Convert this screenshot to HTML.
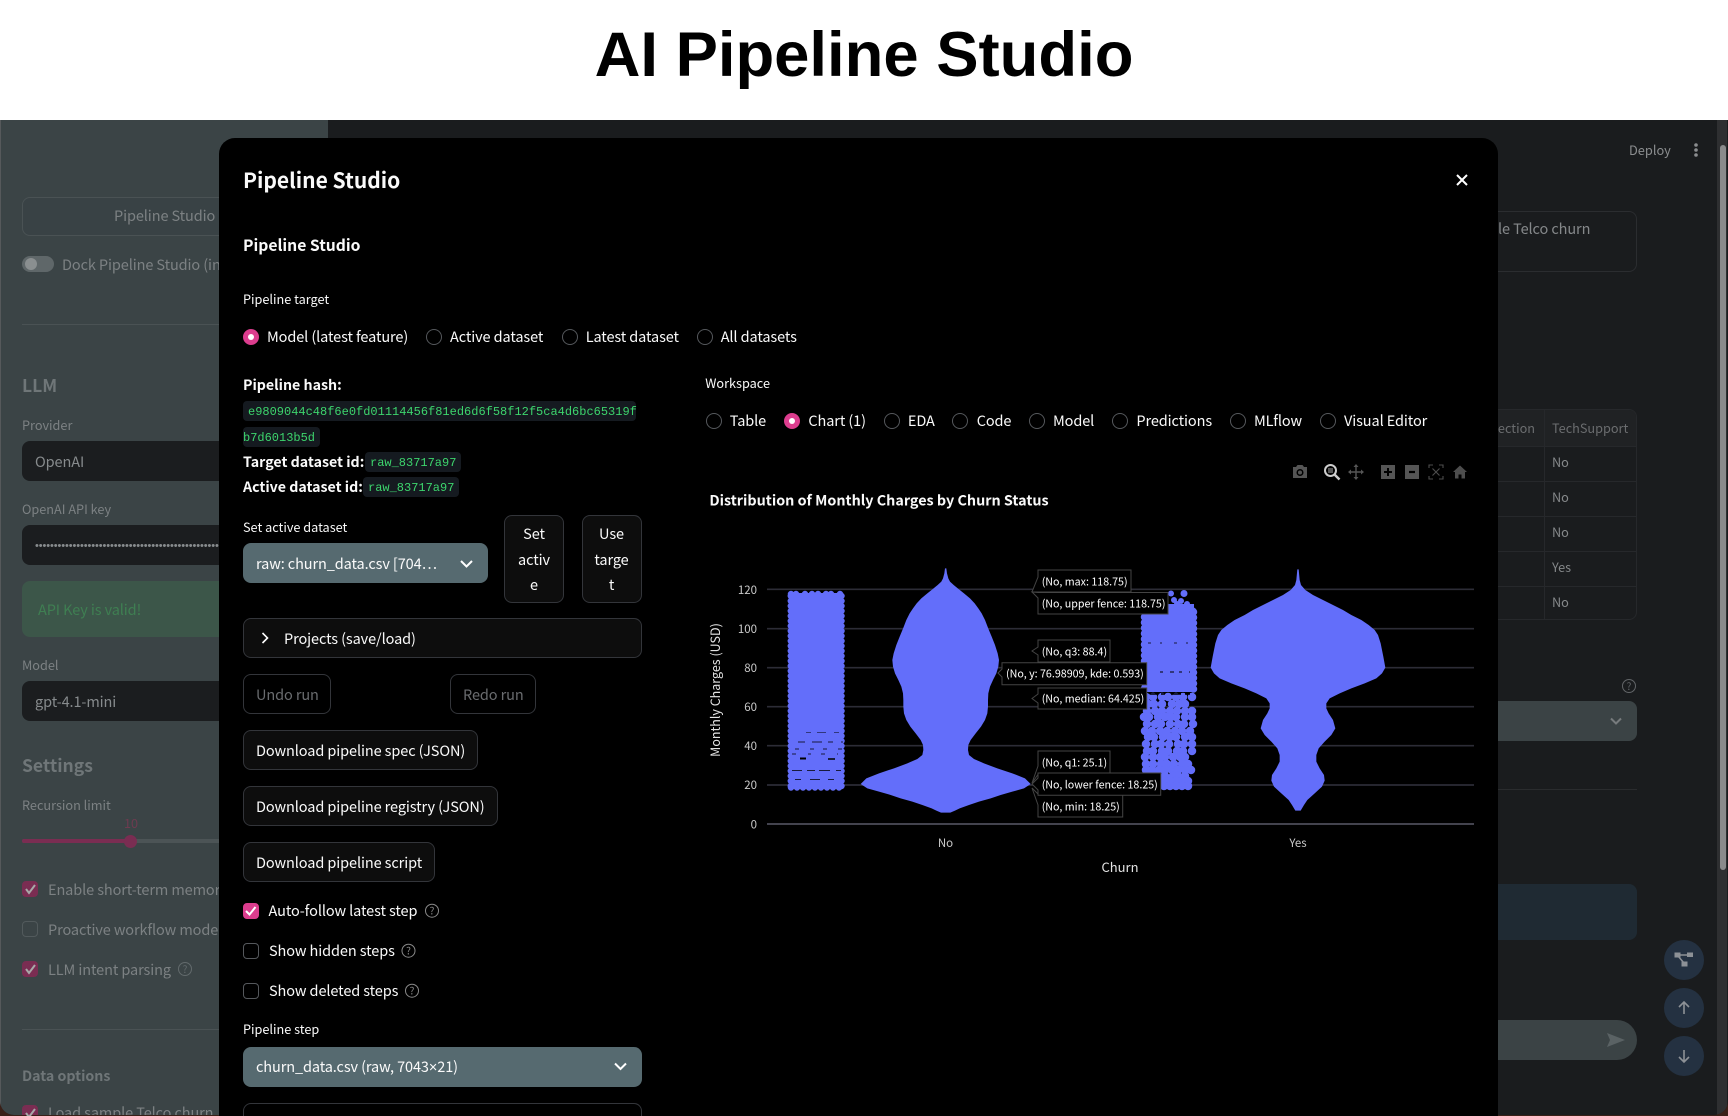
<!DOCTYPE html>
<html><head><meta charset="utf-8"><title>AI Pipeline Studio</title>
<style>
html,body{margin:0;padding:0;width:1728px;height:1116px;overflow:hidden;background:#fff}
*{box-sizing:border-box}
body{font-family:"Noto Sans CJK JP","Liberation Sans",sans-serif;font-size:14.5px;letter-spacing:-.1px;position:relative}
h1{position:absolute;left:0;top:15px;width:1728px;margin:0;text-align:center;font:bold 63.4px/80px "Liberation Sans",sans-serif;color:#000;letter-spacing:0}
#under{position:absolute;left:0;top:1090px;width:1728px;height:26px;background:#3a2018}
#frame{position:absolute;left:0;top:120px;width:1728px;height:995px;background:#1a1c1e;border-radius:0 0 14px 14px;overflow:hidden}
#side{position:absolute;left:0;top:0;width:328px;height:995px;background:#3b4446;border-left:1px solid #56595b}
.t{position:absolute;white-space:nowrap;line-height:20px;margin-top:.5px}
.s{font-size:12.7px;letter-spacing:0}
.b{font-weight:700;font-size:14.2px;letter-spacing:0}
.d{color:#7c8183}
.w{color:#fafafa}
.abs{position:absolute}
.sel{position:absolute;height:40px;background:#1b1d1f;border-radius:8px}
#modal{position:absolute;left:219px;top:138px;width:1279px;height:978px;background:#000;border-radius:16px 16px 0 0;overflow:hidden;color:#fafafa}
.r{position:absolute;width:16px;height:16px;border-radius:50%;border:1px solid #55585c}
.r.on{background:#dc3d8e;border-color:#dc3d8e}
.r.on:after{content:"";position:absolute;left:4px;top:4px;width:6px;height:6px;border-radius:50%;background:#fff}
.c{position:absolute;width:16px;height:16px;border-radius:4px;border:1px solid #55585c}
.c.on{background:#dc3d8e;border-color:#dc3d8e}
.btn{position:absolute;height:40px;border:1px solid #33353a;border-radius:8px;background:#0d0d0d;line-height:39.500px;padding-left:12px;white-space:nowrap;color:#fafafa}
.code{position:absolute;height:20px;background:#151a20;border-radius:4px;font:12px/22px "Liberation Mono",monospace;letter-spacing:0;color:#3dd56d;white-space:nowrap}
.stk{position:absolute;top:377px;width:60px;height:88px;border:1px solid #33353a;border-radius:8px;background:#0d0d0d;text-align:center;line-height:25.6px;padding-top:5px}
#over{position:absolute;left:0;top:0;width:1728px;height:1116px;pointer-events:none}
svg text{font-family:"Noto Sans CJK JP","Liberation Sans",sans-serif;letter-spacing:0}
.x{font-family:"Liberation Sans",sans-serif}
</style></head><body>
<h1>AI Pipeline Studio</h1>
<div id="under"></div>
<div id="frame">
 <div id="side">
  <div class="abs" style="left:21px;top:77px;width:260px;height:39px;border:1px solid #4a5254;border-radius:8px;background:#394245"></div>
  <div class="t d" style="left:113px;top:85.500px">Pipeline Studio</div>
  <div class="abs" style="left:21px;top:136px;width:32px;height:16px;border-radius:8px;background:#5f6769"></div>
  <div class="abs" style="left:24px;top:138px;width:12px;height:12px;border-radius:50%;background:#8a8f90"></div>
  <div class="t d" style="left:61px;top:134px">Dock Pipeline Studio (in sidebar)</div>
  <div class="abs" style="left:21px;top:204px;width:280px;height:1px;background:#4a5254"></div>
  <div class="t b" style="left:21px;top:254px;font-size:17.500px;color:#6f7678;line-height:22px">LLM</div>
  <div class="t s d" style="left:21px;top:294px">Provider</div>
  <div class="sel" style="left:21px;top:321px;width:280px"></div>
  <div class="t" style="left:34px;top:331px;color:#878b8d">OpenAI</div>
  <div class="t s d" style="left:21px;top:378px">OpenAI API key</div>
  <div class="sel" style="left:21px;top:405px;width:280px"></div>
  <div class="t" style="left:34px;top:415px;color:#878b8d;font:11px/20px 'Liberation Sans',sans-serif">••••••••••••••••••••••••••••••••••••••••••••••••••••••</div>
  <div class="abs" style="left:21px;top:461px;width:280px;height:56px;background:#3c5649;border-radius:8px"></div>
  <div class="t" style="left:37px;top:479px;color:#3f7f52">API Key is valid!</div>
  <div class="t s d" style="left:21px;top:534px">Model</div>
  <div class="sel" style="left:21px;top:561px;width:280px"></div>
  <div class="t" style="left:34px;top:571px;color:#878b8d">gpt-4.1-mini</div>
  <div class="t b" style="left:21px;top:634px;font-size:17.500px;color:#6f7678;line-height:22px">Settings</div>
  <div class="t s d" style="left:21px;top:674px">Recursion limit</div>
  <div class="t s" style="left:123px;top:692px;color:#6e3b50">10</div>
  <div class="abs" style="left:21px;top:719px;width:280px;height:4px;background:#4c5456;border-radius:2px"></div>
  <div class="abs" style="left:21px;top:719px;width:108px;height:4px;background:#7a2d52;border-radius:2px"></div>
  <div class="abs" style="left:123px;top:714.5px;width:13px;height:13px;background:#7a2d52;border-radius:50%"></div>
  <div class="c" style="left:21px;top:761px;background:#7a2d52;border-color:#7a2d52"></div>
  <div class="t d" style="left:47px;top:759px">Enable short-term memory</div>
  <div class="c" style="left:21px;top:801px;border-color:#525a5c"></div>
  <div class="t d" style="left:47px;top:799px">Proactive workflow mode</div>
  <div class="c" style="left:21px;top:841px;background:#7a2d52;border-color:#7a2d52"></div>
  <div class="t d" style="left:47px;top:839px">LLM intent parsing</div>
  <div class="abs" style="left:21px;top:909px;width:280px;height:1px;background:#4a5254"></div>
  <div class="t b" style="left:21px;top:945px;color:#6f7678">Data options</div>
  <div class="c" style="left:21px;top:985px;background:#7a2d52;border-color:#7a2d52"></div>
  <div class="t d" style="left:47px;top:982px">Load sample Telco churn</div>
 </div>
 <div class="t" style="left:1629px;top:19.500px;font-size:12.800px;letter-spacing:0;color:#8b8d8f">Deploy</div>
 <div class="abs" style="left:1299px;top:91px;width:338px;height:61px;border:1px solid #2b2d30;border-radius:8px"></div>
 <div class="t" style="left:1498px;top:98px;color:#85888a">le Telco churn</div>
 <div class="abs" style="left:1299px;top:289px;width:338px;height:211px;border:1px solid #26282b;border-radius:8px;overflow:hidden">
   <div class="abs" style="left:0;top:0;width:338px;height:36px;background:#202224"></div>
   <div class="abs" style="left:244px;top:0;width:1px;height:211px;background:#26282b"></div>
   <div class="abs" style="left:0;top:36px;width:338px;height:1px;background:#26282b"></div>
   <div class="abs" style="left:0;top:71px;width:338px;height:1px;background:#26282b"></div>
   <div class="abs" style="left:0;top:106px;width:338px;height:1px;background:#26282b"></div>
   <div class="abs" style="left:0;top:141px;width:338px;height:1px;background:#26282b"></div>
   <div class="abs" style="left:0;top:176px;width:338px;height:1px;background:#26282b"></div>
 </div>
 <div class="t s" style="right:193px;top:297px;color:#6b6d6f">rotection</div>
 <div class="t s" style="left:1552px;top:297px;color:#6b6d6f">TechSupport</div>
 <div class="t s" style="left:1552px;top:331.500px;color:#85888a">No</div>
 <div class="t s" style="left:1552px;top:366.500px;color:#85888a">No</div>
 <div class="t s" style="left:1552px;top:401.500px;color:#85888a">No</div>
 <div class="t s" style="left:1552px;top:436.500px;color:#85888a">Yes</div>
 <div class="t s" style="left:1552px;top:471.500px;color:#85888a">No</div>
 <div class="abs" style="left:1400px;top:581px;width:237px;height:40px;background:#3b4345;border-radius:8px"></div>
 <div class="abs" style="left:1299px;top:669px;width:338px;height:1px;background:#2a2c2e"></div>
 <div class="abs" style="left:1400px;top:764px;width:237px;height:56px;background:#1f2a33;border-radius:8px"></div>
 <div class="abs" style="left:1400px;top:900px;width:237px;height:40px;background:#3b4345;border-radius:0 20px 20px 0"></div>
 <div class="abs" style="left:1664px;top:820px;width:40px;height:40px;border-radius:50%;background:#243141"></div>
 <div class="abs" style="left:1664px;top:868px;width:40px;height:40px;border-radius:50%;background:#243141"></div>
 <div class="abs" style="left:1664px;top:916px;width:40px;height:40px;border-radius:50%;background:#243141"></div>
 <div class="abs" style="left:1717px;top:0;width:10px;height:995px;background:#2e2f31"></div>
 <div class="abs" style="left:1720px;top:25px;width:6px;height:725px;background:#8a8b8c;border-radius:3px"></div>
</div>

<svg id="over" style="z-index:1" viewBox="0 0 1728 1116" width="1728" height="1116">
 <g fill="#8b8d8f"><circle cx="1696" cy="145" r="1.8"/><circle cx="1696" cy="150" r="1.8"/><circle cx="1696" cy="155" r="1.8"/></g>
 <path d="M1611 718.500L1616 723.500L1621 718.500" fill="none" stroke="#777b7d" stroke-width="2"/>
 <circle cx="1629" cy="686" r="6.500" fill="none" stroke="#626568" stroke-width="1"/>
 <text x="1629" y="690" text-anchor="middle" font-size="10" fill="#626568">?</text>
 <path d="M1607 1033L1625 1040L1607 1047L1610 1040Z" fill="#5a6264"/>
 <g fill="#8d9196" stroke="#8d9196"><rect x="1675" y="953" width="5" height="4"/><rect x="1687.500" y="953" width="5" height="3.500"/><rect x="1682" y="962" width="5" height="4"/><path d="M1680 955H1688M1678 956L1684 963" stroke-width="1.500" fill="none"/></g>
 <path d="M1684 1014V1002M1679 1007L1684 1002L1689 1007" fill="none" stroke="#8d9196" stroke-width="1.600"/>
 <path d="M1684 1050V1062M1679 1057L1684 1062L1689 1057" fill="none" stroke="#8d9196" stroke-width="1.600"/>
 <path d="M26 889L29 893L35 885M26 969L29 973L35 965M26 1113L29 1117L35 1109" fill="none" stroke="#a8a8a8" stroke-width="2"/>
 <circle cx="185" cy="969" r="6.500" fill="none" stroke="#626a6c" stroke-width="1"/>
 <text x="185" y="973" text-anchor="middle" font-size="10" fill="#626a6c">?</text>
</svg>

<div id="modal" style="z-index:2">
 <div class="t b" style="left:24px;top:29.500px;font-size:21px;line-height:24px">Pipeline Studio</div>
 <div class="t b" style="left:24px;top:95px;font-size:15.700px;line-height:22px">Pipeline Studio</div>
 <div class="t s" style="left:24px;top:150.500px">Pipeline target</div>
 <div class="r on" style="left:23.500px;top:190.700px"></div><div class="t" style="left:48px;top:188px">Model (latest feature)</div>
 <div class="r" style="left:207px;top:190.700px"></div><div class="t" style="left:231px;top:188px">Active dataset</div>
 <div class="r" style="left:342.500px;top:190.700px"></div><div class="t" style="left:366.700px;top:188px">Latest dataset</div>
 <div class="r" style="left:478px;top:190.700px"></div><div class="t" style="left:501.700px;top:188px">All datasets</div>
 <div class="t b" style="left:24px;top:236px">Pipeline hash:</div>
 <div class="code" style="left:24px;top:263px;width:393px;padding-left:5px">e9809044c48f6e0fd01114456f81ed6d6f58f12f5ca4d6bc65319f</div>
 <div class="code" style="left:24px;top:288.700px;width:77px">b7d6013b5d</div>
 <div class="t b" style="left:24px;top:313px">Target dataset id:</div>
 <div class="code" style="left:146px;top:314px;width:96px;padding-left:5px">raw_83717a97</div>
 <div class="t b" style="left:24px;top:338.500px">Active dataset id:</div>
 <div class="code" style="left:144px;top:339px;width:96px;padding-left:5px">raw_83717a97</div>
 <div class="t s" style="left:24px;top:378.500px">Set active dataset</div>
 <div class="abs" style="left:24px;top:405px;width:244.500px;height:40px;background:#566a70;border-radius:8px"></div>
 <div class="t" style="left:37px;top:415px">raw: churn_data.csv [704…</div>
 <div class="stk" style="left:285px">Set<br>activ<br>e</div>
 <div class="stk" style="left:362.500px">Use<br>targe<br>t</div>
 <div class="btn" style="left:24px;top:480.300px;width:398.500px;padding-left:40px">Projects (save/load)</div>
 <div class="btn" style="left:24px;top:536px;width:88px;color:#6a6c6f;background:#000">Undo run</div>
 <div class="btn" style="left:231px;top:536px;width:86px;color:#6a6c6f;background:#000">Redo run</div>
 <div class="btn" style="left:24px;top:592px;width:235px">Download pipeline spec (JSON)</div>
 <div class="btn" style="left:24px;top:648px;width:254.500px">Download pipeline registry (JSON)</div>
 <div class="btn" style="left:24px;top:704px;width:191.500px">Download pipeline script</div>
 <div class="c on" style="left:24px;top:764.700px"></div>
 <div class="t" style="left:49.500px;top:762px">Auto-follow latest step</div>
 <div class="c" style="left:24px;top:804.700px"></div>
 <div class="t" style="left:50px;top:802px">Show hidden steps</div>
 <div class="c" style="left:24px;top:844.700px"></div>
 <div class="t" style="left:50px;top:842px">Show deleted steps</div>
 <div class="t s" style="left:24px;top:880.500px">Pipeline step</div>
 <div class="abs" style="left:24px;top:908.700px;width:398.500px;height:40px;background:#566a70;border-radius:8px"></div>
 <div class="t" style="left:37px;top:918px">churn_data.csv (raw, 7043<span class="x">×</span>21)</div>
 <div class="abs" style="left:24px;top:964.700px;width:398.500px;height:40px;border:1px solid #33353a;border-radius:8px"></div>
 <div class="t s" style="left:486.300px;top:234.500px">Workspace</div>
 <div class="r" style="left:486.500px;top:274.700px"></div><div class="t" style="left:510.800px;top:272px">Table</div>
 <div class="r on" style="left:565px;top:274.700px"></div><div class="t" style="left:589.400px;top:272px">Chart (1)</div>
 <div class="r" style="left:665px;top:274.700px"></div><div class="t" style="left:688.900px;top:272px">EDA</div>
 <div class="r" style="left:733.400px;top:274.700px"></div><div class="t" style="left:757.700px;top:272px">Code</div>
 <div class="r" style="left:810px;top:274.700px"></div><div class="t" style="left:834px;top:272px">Model</div>
 <div class="r" style="left:893px;top:274.700px"></div><div class="t" style="left:917.400px;top:272px">Predictions</div>
 <div class="r" style="left:1010.500px;top:274.700px"></div><div class="t" style="left:1035px;top:272px">MLflow</div>
 <div class="r" style="left:1101px;top:274.700px"></div><div class="t" style="left:1125px;top:272px">Visual Editor</div>
</div>

<svg id="chart" style="position:absolute;left:0;top:0;z-index:3" viewBox="0 0 1728 1116" width="1728" height="1116">
 <path d="M1457 175L1467 185M1467 175L1457 185" stroke="#fff" stroke-width="2"/>
 <path d="M461 561L466.500 566.500L472 561" fill="none" stroke="#fff" stroke-width="2"/>
 <path d="M615 1063.500L620.500 1069L626 1063.500" fill="none" stroke="#fff" stroke-width="2"/>
 <path d="M262.500 633L267.500 638L262.500 643" fill="none" stroke="#fff" stroke-width="1.600"/>
 <path d="M246 911L249.500 914.500L255.500 907" fill="none" stroke="#fff" stroke-width="2"/>
 <g fill="none" stroke="#8a8a8a" stroke-width="1"><circle cx="432" cy="910.700" r="6.500"/><circle cx="408.500" cy="950.700" r="6.500"/><circle cx="412" cy="990.700" r="6.500"/></g>
 <g font-size="10" fill="#8a8a8a" text-anchor="middle"><text x="432" y="914.500">?</text><text x="408.500" y="954.500">?</text><text x="412" y="994.500">?</text></g>

 <!-- modebar -->
 <g fill="#555">
  <path d="M1293 467H1296L1297.500 465H1302.500L1304 467H1307V478H1293Z"/>
  <circle cx="1300" cy="472.500" r="3.500" fill="#000"/><circle cx="1300" cy="472.500" r="2"/>
  <circle cx="1330.500" cy="470.500" r="5.500" fill="none" stroke="#ccc" stroke-width="2"/>
  <rect x="1328" y="468" width="5" height="5" fill="#555"/>
  <path d="M1334.500 474.500L1339.500 479.500" stroke="#ccc" stroke-width="2.500"/>
  <path d="M1356 465V479M1349 472H1363" stroke="#555" stroke-width="1.400"/>
  <path d="M1356 464L1353.500 467H1358.500ZM1356 480L1353.500 477H1358.500ZM1348 472L1351 469.500V474.500ZM1364 472L1361 469.500V474.500Z"/>
  <rect x="1381" y="465" width="14" height="14"/><path d="M1388 468V476M1384 472H1392" stroke="#000" stroke-width="2"/>
  <rect x="1405" y="465" width="14" height="14"/><path d="M1409 472H1415" stroke="#000" stroke-width="2.200"/>
  <path d="M1429 468V465H1433M1439 465H1443V468M1443 476V479H1439M1433 479H1429V476M1432.500 468.500L1439.500 475.500M1439.500 468.500L1432.500 475.500" fill="none" stroke="#4d4d4d" stroke-width="1.100"/>
  <path d="M1460 465.500L1467 472H1465V478.500H1461.500V474.500H1458.500V478.500H1455V472H1453Z" fill="#4d4d4d"/>
 </g>

 <text x="709.400" y="505.500" font-size="14.350" font-weight="700" fill="#fafafa">Distribution of Monthly Charges by Churn Status</text>

 <!-- grid -->
 <g stroke="#2c2c36" stroke-width="1.700">
  <path d="M767 589.300H1474M767 628.700H1474M767 667.700H1474M767 706.700H1474M767 745.700H1474M767 785H1474"/>
 </g>
 <path d="M767 824H1474" stroke="#43434e" stroke-width="2"/>

 <g font-size="11.500" fill="#c9c9c9" text-anchor="end">
  <text x="757" y="594">120</text><text x="757" y="633">100</text><text x="757" y="672">80</text><text x="757" y="711">60</text><text x="757" y="750">40</text><text x="757" y="789">20</text><text x="757" y="828.500">0</text>
 </g>
 <g font-size="11.500" fill="#c9c9c9" text-anchor="middle"><text x="945.500" y="847">No</text><text x="1298" y="847">Yes</text></g>
 <text x="1120" y="872" font-size="13" text-anchor="middle" fill="#e4e4e4">Churn</text>
 <text transform="translate(720 690) rotate(-90)" font-size="12.500" text-anchor="middle" fill="#e4e4e4">Monthly Charges (USD)</text>

 <!-- violin No -->
 <polygon transform="translate(780 560) scale(.33333)" fill="#636efa" points="499,25 501,40 505,55 510,65 521,75 537,88 552,100 570,115 584,130 595,145 605,160 615,180 625,206 635,230 645,255 653,280 657,300 655,320 649,340 639,360 630,380 625,400 624,420 624,440 622,460 615,480 603,500 587,520 572,540 565,555 564,570 567,585 582,597 612,610 652,625 697,640 735,655 752,672 732,685 697,695 662,705 632,715 597,725 567,735 539,745 525,752 511,758 483,758 469,752 455,745 427,735 397,725 362,715 332,705 297,695 262,685 242,672 259,655 297,640 342,625 382,610 412,597 427,585 430,570 429,555 422,540 407,520 391,500 379,480 372,460 370,440 370,420 369,400 364,380 355,360 345,340 339,320 337,300 341,280 349,255 359,230 369,206 379,180 389,160 399,145 410,130 424,115 442,100 457,88 473,75 484,65 489,55 493,40 495,25"/>
 <!-- violin Yes -->
 <polygon transform="translate(1100 560) scale(.33333)" fill="#636efa" points="596,28 599,60 603,75 616,90 639,105 669,120 699,135 729,150 754,165 784,180 806,195 824,210 834,225 842,250 850,290 856,323 846,340 829,355 794,370 754,385 719,400 689,415 679,430 679,445 686,460 699,480 706,505 694,525 674,545 656,565 649,585 649,605 659,625 672,645 674,662 666,680 644,700 622,720 612,735 602,752 586,752 576,735 566,720 544,700 522,680 514,662 516,645 529,625 539,605 539,585 532,565 514,545 494,525 482,505 489,480 502,460 509,445 509,430 499,415 469,400 434,385 394,370 359,355 342,340 332,323 338,290 346,250 354,225 364,210 382,195 404,180 434,165 459,150 489,135 519,120 549,105 572,90 585,75 589,60 592,28"/>

 <!-- strip No -->
 <rect x="790" y="593" width="52" height="194" fill="#636efa"/>
 <g stroke="#636efa" stroke-linecap="round" fill="none" stroke-width="6.500">
  <path d="M791 594H841" stroke-dasharray="0 5 0 9 0 7 0 6 0 8"/>
  <path d="M790.800 596V787M841.500 596V787" stroke-dasharray="0 5"/>
  <path d="M791 787.500H841" stroke-dasharray="0 6"/>
 </g>
 <g stroke="#000" fill="none">
  <path d="M806 732.500H842" stroke-width=".5" stroke-dasharray="5 6 9 8"/>
  <path d="M798 742H843" stroke-width=".7" stroke-dasharray="7 7 10 6 5 8"/>
  <path d="M795 749H842" stroke-width=".8" stroke-dasharray="4 11 4 9"/>
  <path d="M800 758.500H806" stroke-width="2"/><path d="M828 759H835" stroke-width="1.500"/>
  <path d="M792 754H838" stroke-width=".7" stroke-dasharray="4 12 3 10"/>
  <path d="M792 770.500H841" stroke-width=".8" stroke-dasharray="10 5 8 4 11 6"/>
  <path d="M795 779.500H838" stroke-width=".7" stroke-dasharray="6 9 10 8"/>
 </g>

 <!-- strip Yes -->
 <rect x="1144" y="604" width="50" height="88" fill="#636efa"/>
 <g fill="#636efa">
  <circle cx="1171" cy="593.500" r="3"/><circle cx="1184" cy="593.500" r="3.500"/><circle cx="1174" cy="600" r="3"/><circle cx="1177" cy="604" r="3"/><circle cx="1181" cy="601" r="3"/><circle cx="1187" cy="604" r="3"/><circle cx="1191" cy="607" r="3"/><circle cx="1193" cy="611" r="3.500"/><circle cx="1180" cy="611" r="4"/>
 </g>
 <g stroke="#636efa" stroke-linecap="round" fill="none" stroke-width="8.500">
  <path d="M1144.500 606V692M1193.500 612V692" stroke-dasharray="0 5.500" stroke-width="7.500"/>
  <path d="M1146 697H1194" stroke-dasharray="0 7 0 9 0 6 0 8"/>
  <path d="M1148 704H1193" stroke-dasharray="0 6 0 8 0 10 0 7"/>
  <path d="M1147 711H1195" stroke-dasharray="0 8 0 7"/>
  <path d="M1144 717H1195" stroke-dasharray="0 5 0 9 0 7 0 6"/>
  <path d="M1147 724H1194" stroke-dasharray="0 8 0 6 0 9"/>
  <path d="M1145 731H1194" stroke-dasharray="0 7 0 8"/>
  <path d="M1148 737H1195" stroke-dasharray="0 6 0 9 0 7"/>
  <path d="M1146 744H1193" stroke-dasharray="0 9 0 6 0 8"/>
  <path d="M1147 751H1194" stroke-dasharray="0 6 0 9"/>
  <path d="M1145 757H1193" stroke-dasharray="0 8 0 7 0 5"/>
  <path d="M1146 764H1191" stroke-dasharray="0 7 0 8 0 6"/>
  <path d="M1146 770H1194" stroke-dasharray="0 6 0 7"/>
  <path d="M1145 776H1193" stroke-dasharray="0 8 0 5 0 7"/>
  <path d="M1146 781H1194" stroke-dasharray="0 6"/>
  <path d="M1146 786H1194" stroke-dasharray="0 6"/>
 </g>
 <g stroke="#000" fill="none">
  <path d="M1148 643H1190" stroke-width=".8" stroke-dasharray="3 9 2 12"/>
  <path d="M1160 672H1190" stroke-width="1" stroke-dasharray="3 7 4 5"/>
  <path d="M1150 694H1190" stroke-width="1.500" stroke-dasharray="8 3 4 6 10 4"/>
 </g>

 <!-- tooltips -->
 <g fill="#000" stroke="#444" stroke-width="1">
  <path d="M1038 570H1131V592H1040L1032 592L1038 577Z"/>
  <path d="M1038 592.500H1168V614H1038V598L1032 592Z"/>
  <path d="M1038 640H1110V662H1038V655L1032 651L1038 647Z"/>
  <path d="M1002 662.700H1146.700V684.700H1002V677L998 673L1002 669Z"/>
  <path d="M1038 688H1146.700V709H1038V703L1032 698.500L1038 694Z"/>
  <path d="M1038 751H1110V773H1039L1032 783L1038 766Z"/>
  <path d="M1038 795H1122.700V817H1038V805L1032 788L1039 795Z"/>
  <path d="M1038 773H1160.700V795.300H1038V790L1032 784L1038 778Z"/>
 </g>
 <g font-size="10.700" fill="#fff">
  <text x="1041.700" y="585.500">(No, max: 118.75)</text>
  <text x="1041.700" y="607.500">(No, upper fence: 118.75)</text>
  <text x="1041.700" y="655.500">(No, q3: 88.4)</text>
  <text x="1006" y="677.500">(No, y: 76.98909, kde: 0.593)</text>
  <text x="1041.700" y="702.500">(No, median: 64.425)</text>
  <text x="1041.700" y="766.500">(No, q1: 25.1)</text>
  <text x="1041.700" y="788.500">(No, lower fence: 18.25)</text>
  <text x="1041.700" y="810.500">(No, min: 18.25)</text>
 </g>
</svg>
</body></html>
